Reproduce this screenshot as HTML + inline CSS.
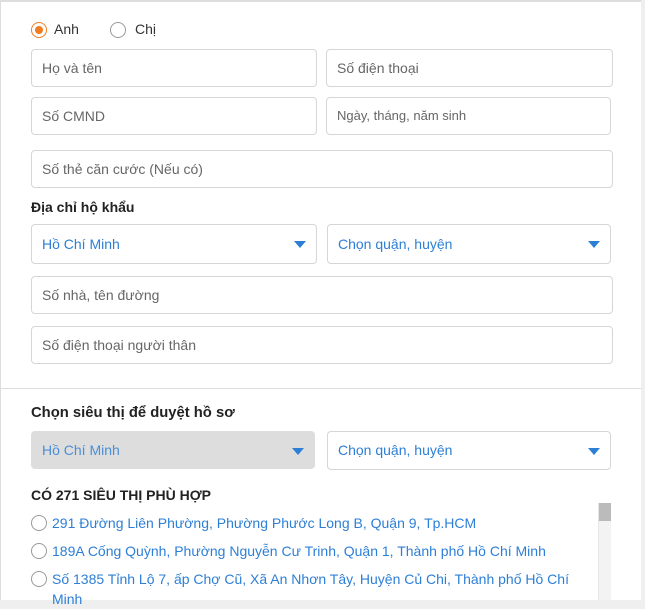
<!DOCTYPE html>
<html><head><meta charset="utf-8"><style>
*{box-sizing:border-box;margin:0;padding:0}
body{width:645px;height:600px;overflow:hidden;background:#efefef;font-family:"Liberation Sans",Arial,sans-serif;font-size:14px;color:#333;position:relative}
.panel{position:absolute;left:0;top:0;width:641px;height:600px;background:#fff;border-top:2px solid #ddd;border-left:1px solid #ddd}
.a{position:absolute}
.in{position:absolute;border:1px solid #d6d6d6;border-radius:4px;height:38px;line-height:36px;padding-left:10px;color:#666;font-size:14px;background:#fff}
.sel{color:#2d7fd6}
.sel:after{content:"";position:absolute;right:10px;top:16px;border-left:6px solid transparent;border-right:6px solid transparent;border-top:7px solid #2d7fd6}
.lbl{position:absolute;left:31px;font-weight:bold;font-size:14px;color:#222}
.radio{position:absolute;width:16px;height:16px;border:1px solid #999;border-radius:50%;background:#fff}
.item{position:absolute;left:31px;color:#2d7fd6;font-size:14px;line-height:20px}
.item .radio{left:0;top:2px}
.item span{display:block;padding-left:21px;width:560px}
</style></head><body>
<div class="panel"></div>
<div class="radio" style="left:31px;top:22px;border-color:#f07d22"><div style="position:absolute;left:3px;top:3px;width:8px;height:8px;border-radius:50%;background:#f07d22"></div></div>
<div class="a" style="left:54px;top:21px">Anh</div>
<div class="radio" style="left:110px;top:22px"></div>
<div class="a" style="left:135px;top:21px">Chị</div>
<div class="in" style="left:31px;top:49px;width:286px">Họ và tên</div>
<div class="in" style="left:326px;top:49px;width:287px">Số điện thoại</div>
<div class="in" style="left:31px;top:97px;width:286px">Số CMND</div>
<div class="in" style="left:326px;top:97px;width:285px;font-size:13px">Ngày, tháng, năm sinh</div>
<div class="in" style="left:31px;top:150px;width:582px">Số thẻ căn cước (Nếu có)</div>
<div class="lbl" style="top:199px">Địa chỉ hộ khẩu</div>
<div class="in sel" style="left:31px;top:224px;width:286px;height:40px;line-height:38px">Hồ Chí Minh</div>
<div class="in sel" style="left:327px;top:224px;width:284px;height:40px;line-height:38px">Chọn quận, huyện</div>
<div class="in" style="left:31px;top:276px;width:582px">Số nhà, tên đường</div>
<div class="in" style="left:31px;top:326px;width:582px">Số điện thoại người thân</div>
<div class="a" style="left:0;top:388px;width:641px;height:1px;background:#ddd"></div>
<div class="lbl" style="top:405px;font-size:14.8px">Chọn siêu thị để duyệt hồ sơ</div>
<div class="in sel" style="left:31px;top:431px;width:284px;height:38px;background:#ddd;border-color:#ddd;color:#4a8ed6">Hồ Chí Minh</div>
<div class="in sel" style="left:327px;top:431px;width:284px;height:39px">Chọn quận, huyện</div>
<div class="lbl" style="top:487px">CÓ 271 SIÊU THỊ PHÙ HỢP</div>
<div class="item" style="top:513px"><div class="radio"></div><span>291 Đường Liên Phường, Phường Phước Long B, Quận 9, Tp.HCM</span></div>
<div class="item" style="top:541px"><div class="radio"></div><span>189A Cống Quỳnh, Phường Nguyễn Cư Trinh, Quận 1, Thành phố Hồ Chí Minh</span></div>
<div class="item" style="top:569px"><div class="radio"></div><span>Số 1385 Tỉnh Lộ 7, ấp Chợ Cũ, Xã An Nhơn Tây, Huyện Củ Chi, Thành phố Hồ Chí Minh</span></div>
<div class="a" style="left:598px;top:503px;width:13px;height:97px;background:#f3f3f3;border-left:1px solid #e6e6e6"></div>
<div class="a" style="left:599px;top:503px;width:12px;height:18px;background:#bbb"></div>
</body></html>
